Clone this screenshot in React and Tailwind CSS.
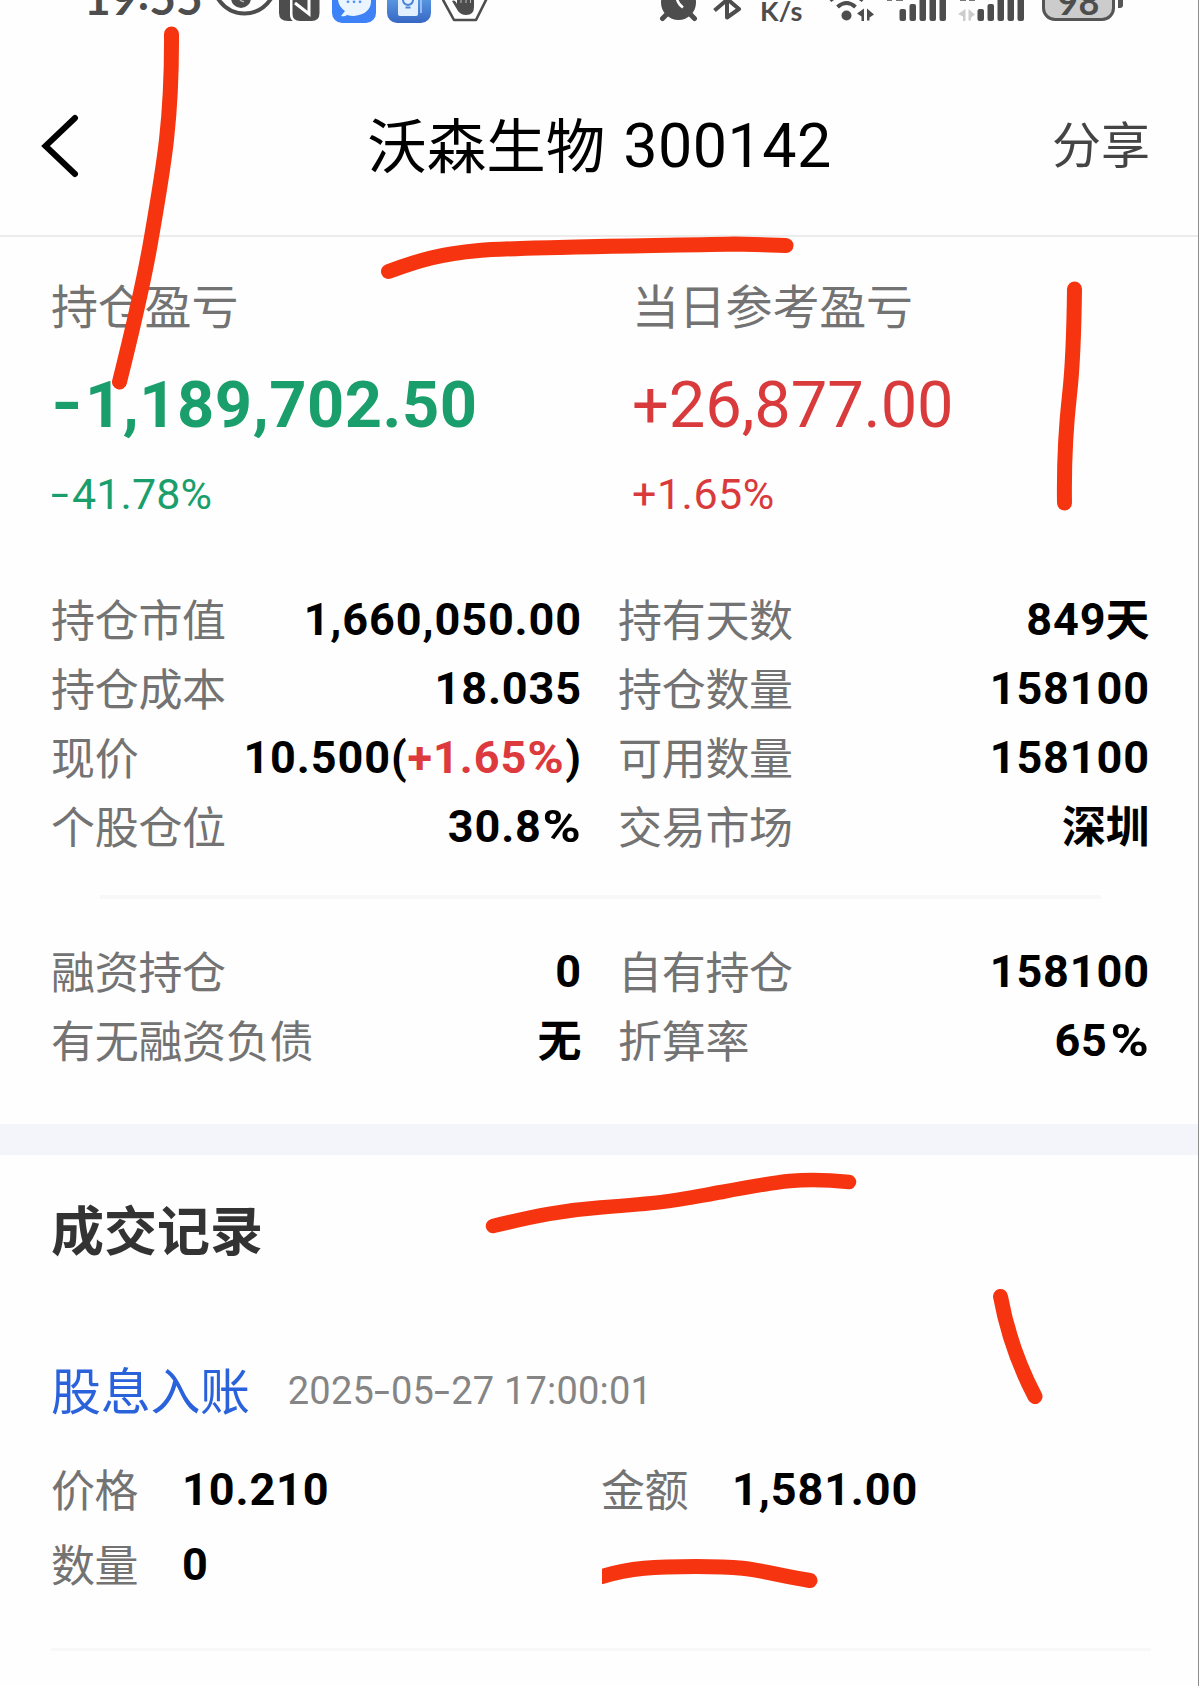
import React from "react";

const CJK = "font-['Noto_Sans_CJK_SC',sans-serif]";
const NUM = "font-['Roboto','Noto_Sans_CJK_SC',sans-serif]";

function StatusBar() {
  return (
    <div className="flex h-[56px] items-start overflow-hidden pl-[84px] text-[#4d4d4d]">
      <span className="-mt-[26px] w-[132px] shrink-0 whitespace-nowrap font-['Lato',sans-serif] text-[46px] font-bold leading-[48px]">
        19<span className="inline-block -translate-y-[5px]">:</span>55
      </span>
      <svg className="h-[26px] w-[58px] shrink-0" viewBox="216 0 58 26">
        <path d="M217.500-2C224 8 233 13.500 244.500 13.500S265 8 271.500-2" fill="none" stroke="currentColor" strokeWidth="4" />
        <circle cx="241" cy="-2" r="10" fill="currentColor" />
        <path d="M240 0q2 2 4 1.500" stroke="#bbb" strokeWidth="1.500" fill="none" />
      </svg>
      <svg className="ml-[4px] h-[26px] w-[43px] shrink-0" viewBox="278 0 43 26">
        <path d="M279-2h11v17q0 4 3 6h-5q-9 0-9-8z" fill="currentColor" />
        <path d="M292.500-3h27v16q0 8-8 8H300q-7.500 0-7.500-7z" fill="currentColor" />
        <path d="M295 3l14 11V-2" fill="none" stroke="#fff" strokeWidth="3" />
      </svg>
      <svg className="ml-[11px] h-[26px] w-[44px] shrink-0" viewBox="332 0 44 26">
        <rect x="332" y="-20" width="44" height="43" rx="10" fill="#3d82f7" />
        <path d="M341 16l4-5q-7-5-7-12h33q1 15-17 17-4 0-7-1-2 2-6 1z" fill="#eaf5ff" />
        <g fill="#5592f5"><circle cx="348" cy="1.800" r="1.400" /><circle cx="354" cy="1.800" r="1.400" /><circle cx="360" cy="1.800" r="1.400" /></g>
      </svg>
      <svg className="ml-[11px] h-[26px] w-[44px] shrink-0" viewBox="387 0 44 26">
        <defs><linearGradient id="card" x1="0" x2="0" y1="0" y2="1"><stop offset=".4" stopColor="#5b9ae2" /><stop offset="1" stopColor="#3767c4" /></linearGradient></defs>
        <rect x="387" y="-20" width="44" height="43" rx="10" fill="url(#card)" />
        <rect x="398" y="-10" width="20" height="26" rx="2" fill="#e2efff" />
        <path d="M421-2v15" stroke="#9cc3f3" strokeWidth="1.800" />
        <path d="M403 0q0 4 5 5 5-1 5-5M405.500 7.500h5" stroke="#4d85d3" strokeWidth="2" fill="none" />
      </svg>
      <svg className="ml-[11px] h-[26px] w-[46px] shrink-0" viewBox="442 0 46 26">
        <path d="M442-2l12 22h22l11-22" fill="none" stroke="currentColor" strokeWidth="2.600" strokeLinejoin="round" />
        <path d="M452 1q3-2 5 3v-6h17v9q0 8-8 8-5 0-8-4z" fill="currentColor" />
        <path d="M461-1v4M466-1v4M470.500-1v4" stroke="#ddd" strokeWidth=".8" />
      </svg>
      <svg className="ml-[171px] h-[26px] w-[40px] shrink-0" viewBox="659 0 40 26">
        <circle cx="678.500" cy="2.500" r="17.500" fill="currentColor" />
        <path d="M667 14l-4.500 4.500M690 14l4.500 4.500" stroke="currentColor" strokeWidth="5" strokeLinecap="round" />
        <path d="M677-1q1 5 6 8.500" stroke="#fff" strokeWidth="2.600" fill="none" />
      </svg>
      <svg className="ml-[14px] h-[26px] w-[30px] shrink-0" viewBox="713 0 30 26">
        <path d="M714.500 10.500L728-1M727-4V17.500L739 9 726-2" fill="none" stroke="currentColor" strokeWidth="4" strokeLinejoin="round" />
      </svg>
      <span className="ml-[17px] mt-[-4px] w-[68px] shrink-0 font-['Lato',sans-serif] text-[27px] font-bold leading-[30px] tracking-[0.3px]">K/s</span>
      <svg className="h-[26px] w-[46px] shrink-0" viewBox="828 0 46 26">
        <circle cx="846.500" cy="15.500" r="5" fill="currentColor" />
        <path d="M837.500 7q9-8 18 0M830 .5q16-13 33 0" fill="none" stroke="currentColor" strokeWidth="4" />
        <path d="M864 8.500v12.500h-2.500v-4.500l-4.500-3zM867 8.500v12h2.500v-3l4.500-3z" fill="currentColor" />
      </svg>
      <svg className="ml-[12px] h-[26px] w-[61px] shrink-0" viewBox="0 0 61 26">
        <path d="M1 0h5M10 0h7" stroke="#777" strokeWidth="2" />
        <Bars />
      </svg>
      <svg className="ml-[11px] h-[26px] w-[67px] shrink-0" viewBox="0 0 67 26">
        <path d="M7.500 9v12H5v-4.500L0 14zM10.500 9v11.500H13v-3l4-3z" fill="#ccc" />
        <path d="M2 0h6M11 0h6" stroke="#777" strokeWidth="2" />
        <g transform="translate(6 0)"><Bars /></g>
      </svg>
      <div className="-mt-[24px] ml-[17px] flex h-[45px] w-[73px] shrink-0 items-end justify-center rounded-[13px] border-[3px] border-[#555] bg-[#ccc]">
        <span className="-mb-[1px] font-['Lato',sans-serif] text-[36px] font-bold leading-[36px]">98</span>
      </div>
      <div className="-mt-[8px] ml-[3px] h-[16px] w-[5px] shrink-0 rounded-r-[3px] bg-[#555]" />
    </div>
  );
}

function Bars() {
  return (
    <g fill="currentColor">
      <rect x="13.500" y="9" width="6.500" height="12" rx="2" />
      <rect x="23.500" y="4" width="6.500" height="17" rx="2" />
      <rect x="33.500" y="-2" width="6.500" height="23" rx="2" />
      <rect x="43.500" y="-4" width="6.500" height="25" rx="2" />
      <rect x="53.500" y="-4" width="6.500" height="25" rx="2" />
    </g>
  );
}

function NavBar() {
  return (
    <div className="grid h-[181px] grid-cols-[1fr_auto_1fr] items-center border-b-2 border-[#ececec] pl-[40px] pr-[48px]">
      <svg className="h-[64px] w-[42px]" viewBox="40 113 42 64" fill="none">
        <path d="M75 117L45.500 145 75 173" stroke="#000" strokeWidth="6" strokeLinecap="round" strokeLinejoin="miter" />
      </svg>
      <h1 className="ml-[9px] flex items-center whitespace-pre text-black">
        <span className={`${CJK} -mt-[7px] text-[59.5px] leading-[80px]`}>沃森生物</span>
        <span className={`${NUM} ml-[18px] text-[61px] leading-[80px] tracking-[0.5px]`}>300142</span>
      </h1>
      <span className={`${CJK} -mt-[7px] justify-self-end text-[49px] leading-[70px] text-[#444]`}>分享</span>
    </div>
  );
}

function Dash({ className }) {
  return <span className={`inline-block origin-left ${className}`}>-</span>;
}

function Percent({ className = "mx-[3px] scale-x-115" }) {
  return <span className={`inline-block ${className}`}>%</span>;
}

function Summary({ label, amount, percent, tone, amountClass, percentClass }) {
  return (
    <div className="flex flex-col">
      <span className={`${CJK} text-[47px] leading-[64px] tracking-[-0.2px] text-[#737373]`}>{label}</span>
      <span className={`${NUM} mt-[33px] whitespace-nowrap text-[65px] leading-[72px] ${tone} ${amountClass}`}>{amount}</span>
      <span className={`${NUM} mt-[28px] text-[43px] leading-[50px] ${tone} ${percentClass}`}>{percent}</span>
    </div>
  );
}

function Row({ label, children }) {
  return (
    <div className="flex h-[69px] items-center justify-between whitespace-nowrap">
      <span className={`${CJK} text-[44px] leading-[64px] tracking-[-0.3px] text-[#737373]`}>{label}</span>
      <span className={`${NUM} pt-[5px] text-[45px] font-bold leading-[60px] tracking-[0.9px] text-black`}>{children}</span>
    </div>
  );
}

function Columns({ className, left, right }) {
  return (
    <div className={`grid grid-cols-[531px_532px] gap-x-[36px] pl-[51px] ${className}`}>
      <div>{left.map(([label, value]) => <Row key={label} label={label}>{value}</Row>)}</div>
      <div>{right.map(([label, value]) => <Row key={label} label={label}>{value}</Row>)}</div>
    </div>
  );
}

function Han({ children }) {
  return <span className="relative right-[1px] top-[1px] text-[44px] tracking-[-0.5px]">{children}</span>;
}

function Field({ label, value }) {
  return (
    <div className="flex h-[75px] items-center">
      <span className={`${CJK} w-[131px] text-[44px] leading-[64px] tracking-[-0.5px] text-[#737373]`}>{label}</span>
      <span className={`${NUM} pt-[4px] text-[45px] font-bold leading-[60px] tracking-[0.9px] text-black`}>{value}</span>
    </div>
  );
}

function Marks() {
  return (
    <svg className="pointer-events-none absolute left-0 top-0 h-[1686px] w-[1199px]" viewBox="0 0 1199 1686" fill="none" stroke="#f63510" strokeWidth="15" strokeLinecap="round" strokeLinejoin="round">
      <path d="M171.500 34C172 120 164 165 151.500 237C144 282 131 336 119.500 382" />
      <path d="M388.500 271.500C420 260 440 254 479 250.500C520 247 640 246 734 244L786 245.500" />
      <path d="M1074.500 289C1074 330 1073 365 1069.500 395C1065 435 1064 470 1064.500 503" />
      <path d="M493 1226C535 1216 565 1210 600 1207.500C670 1202 665 1202 722 1192C780 1181 802 1177 849 1182" strokeWidth="14.500" />
      <path d="M1000.500 1296.500C1007 1332 1018 1364 1035 1396.500" />
      <path d="M602 1576.500C630 1568 655 1566.500 696 1566.500C755 1566.500 755 1571 810 1580.500" />
      <rect x="590" y="1560" width="12" height="30" fill="#fefefe" stroke="none" />
    </svg>
  );
}

export default function App() {
  return (
    <div className="relative h-[1686px] w-[1199px] overflow-hidden border-r border-[#8c8c8c] bg-[#fefefe]">
      <StatusBar />
      <NavBar />
      <div className="grid grid-cols-[581px_1fr] pl-[51px] pt-[35px]">
        <Summary
          label="持仓盈亏"
          amount={<><Dash className="w-[34px] -translate-y-[2px] scale-x-125" />1,189,702.50</>}
          percent={<><Dash className="w-[21px] -translate-y-[1px] scale-x-150" />41.78%</>}
          tone="text-[#1a9f6c]"
          amountClass="font-bold tracking-[0.5px]"
          percentClass="tracking-[0.1px]"
        />
        <Summary label="当日参考盈亏" amount="+26,877.00" percent="+1.65%" tone="text-[#d93a3c]" amountClass="tracking-[-0.1px]" percentClass="tracking-[0.5px]" />
      </div>
      <Columns
        className="mt-[64px]"
        left={[
          ["持仓市值", "1,660,050.00"],
          ["持仓成本", "18.035"],
          ["现价", <>10.500(<span className="text-[#dc3a3d]">+1.65<Percent className="mx-[2px] scale-x-110" /></span>)</>],
          ["个股仓位", <>30.8<Percent /></>],
        ]}
        right={[
          ["持有天数", <>849<Han>天</Han></>],
          ["持仓数量", "158100"],
          ["可用数量", "158100"],
          ["交易市场", <Han>深圳</Han>],
        ]}
      />
      <div className="ml-[100px] mt-[36px] h-[4px] w-[1001px] bg-[#f8f8f8]" />
      <Columns
        className="mt-[36px]"
        left={[["融资持仓", "0"], ["有无融资负债", <Han>无</Han>]]}
        right={[["自有持仓", "158100"], ["折算率", <>65<Percent className="ml-[5px] mr-[3px] scale-x-115" /></>]]}
      />
      <div className="mt-[51px] h-[31px] bg-[#f4f5fb]" />
      <section className="pl-[51px]">
        <h2 className={`${CJK} pt-[33px] text-[53px] font-bold leading-[80px] text-[#333]`}>成交记录</h2>
        <div className="mt-[80px] flex h-[80px] items-center">
          <span className={`${CJK} text-[50px] leading-[70px] tracking-[-0.3px] text-[#2a62dc]`}>股息入账</span>
          <span className={`${NUM} ml-[38px] whitespace-nowrap pt-[5px] text-[38px] leading-[50px] tracking-[0.2px] text-[#858585]`}>
            2025<Dash className="w-[17px] scale-x-150" />05<Dash className="w-[17px] scale-x-150" />27 17:00:01
          </span>
        </div>
        <div className="mt-[22px] grid grid-cols-[550px_1fr]">
          <Field label="价格" value="10.210" />
          <Field label="金额" value="1,581.00" />
          <Field label="数量" value="0" />
        </div>
        <div className="mt-[48px] h-[3px] w-[1100px] bg-[#f8f8f8]" />
      </section>
      <Marks />
    </div>
  );
}
